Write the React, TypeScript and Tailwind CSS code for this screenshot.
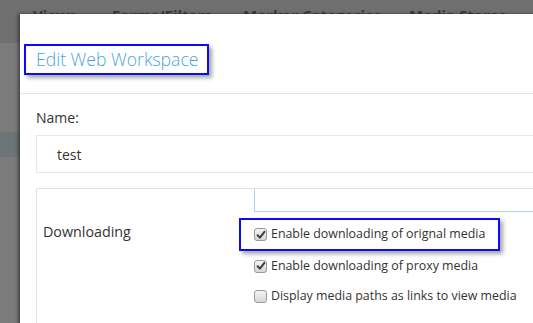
import React from "react";

function Check({ checked }: { checked: boolean }) {
  return (
    <span className="relative inline-flex h-[13px] w-[13px] shrink-0 items-center justify-center rounded-[3px] border border-[#9a9a9a] bg-gradient-to-b from-[#f4f4f4] to-[#d6d6d6]">
      {checked && (
        <svg width="10" height="10" viewBox="0 0 10 10" className="block">
          <path d="M1.6 5.2 L3.9 7.6 L8.4 1.8" fill="none" stroke="#3c3c3c" strokeWidth="2" strokeLinecap="round" strokeLinejoin="round" />
        </svg>
      )}
    </span>
  );
}

export default function App() {
  const font = { fontFamily: '"Open Sans", "Noto Sans", sans-serif' };
  return (
    <div className="relative h-[323px] w-[533px] overflow-hidden bg-[#7b7b7b]" style={font}>
      {/* background page (dimmed) */}
      <div className="flex h-[43px] bg-[#6f6f6f] pl-[33px] pt-[4px] text-[15px] font-bold text-[#3a3a3a]">
        <div className="w-[79px]">Views</div>
        <div className="w-[131px]">Forms/Filters</div>
        <div className="w-[166px]">Marker Categories</div>
        <div>Media Stores</div>
      </div>
      <div className="mt-[89px] h-[25px] bg-[#6c7477]" />

      {/* modal */}
      <div className="absolute left-[20px] top-[14px] h-[340px] w-[560px] bg-white shadow-[-2px_0_3px_rgba(0,0,0,0.45)]">
        <div className="h-[80px] border-b border-[#e4e4e4] pl-[4px] pt-[30px]">
          <div className="inline-flex h-[31px] w-[185px] items-center border-2 border-[#0b0bf5] pl-[10px] text-[17.6px] font-light text-[#4aa3dc] shadow-[3px_3px_4px_rgba(0,0,0,0.35)]">
            Edit Web Workspace
          </div>
        </div>
        <div className="pl-[16px] pt-[14px]">
          <div className="h-[20px] text-[14px] leading-[20px] text-[#333]">Name:</div>
          <div className="mt-[7px] flex h-[38px] items-center border border-[#dbe9f4] pl-[20px] text-[14px] text-[#333]">
            test
          </div>
          <div className="mt-[15px] flex h-[200px] border border-[#e3e3e3]">
            <div className="w-[217px] pl-[6px] pt-[33px] text-[14.3px] leading-[20px] text-[#333]">Downloading</div>
            <div className="flex flex-1 flex-col text-[12.4px] text-[#333]">
              <div className="h-[23px] border-b border-l border-[#a9d5ec]" />
              <div className="-ml-[15px] mt-[6px] flex h-[33px] w-[261px] items-center gap-[4px] border-2 border-[#0b0bf5] pl-[13px] shadow-[3px_3px_4px_rgba(0,0,0,0.35)]">
                <Check checked />
                <span>Enable downloading of orignal media</span>
              </div>
              <div className="mt-[5px] flex h-[20px] items-center gap-[4px]">
                <Check checked />
                <span>Enable downloading of proxy media</span>
              </div>
              <div className="mt-[10px] flex h-[20px] items-center gap-[4px]">
                <Check checked={false} />
                <span>Display media paths as links to view media</span>
              </div>
            </div>
          </div>
        </div>
      </div>
    </div>
  );
}
